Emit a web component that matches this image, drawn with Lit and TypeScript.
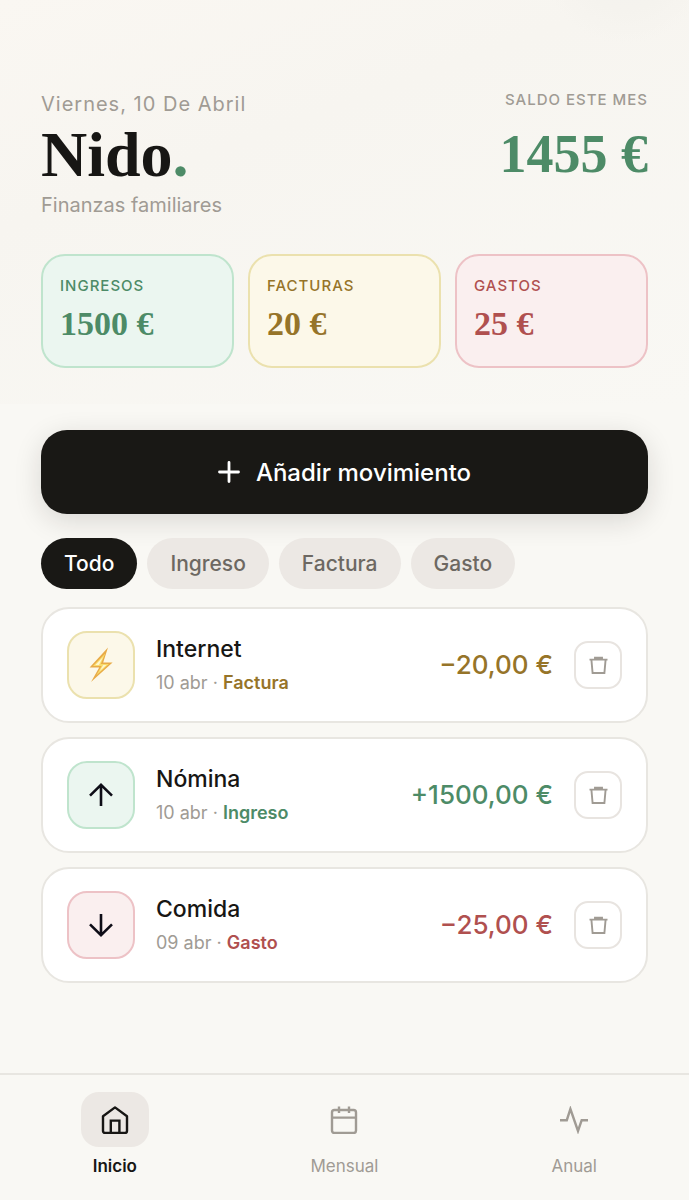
import { LitElement, html, css, svg, nothing } from "lit";
import { customElement, property, state } from "lit/decorators.js";
import { classMap } from "lit/directives/class-map.js";

type Kind = "ingreso" | "factura" | "gasto";

interface Movement {
  name: string;
  date: string;
  kind: Kind;
  amount: string;
}

const KIND_LABEL: Record<Kind, string> = {
  ingreso: "Ingreso",
  factura: "Factura",
  gasto: "Gasto",
};

const MOVEMENTS: Movement[] = [
  { name: "Internet", date: "10 abr", kind: "factura", amount: "−20,00 €" },
  { name: "Nómina", date: "10 abr", kind: "ingreso", amount: "+1500,00 €" },
  { name: "Comida", date: "09 abr", kind: "gasto", amount: "−25,00 €" },
];

const SUMMARY: { label: string; value: string; kind: Kind }[] = [
  { label: "Ingresos", value: "1500 €", kind: "ingreso" },
  { label: "Facturas", value: "20 €", kind: "factura" },
  { label: "Gastos", value: "25 €", kind: "gasto" },
];

const FILTERS: { id: Kind | "todo"; label: string }[] = [
  { id: "todo", label: "Todo" },
  { id: "ingreso", label: "Ingreso" },
  { id: "factura", label: "Factura" },
  { id: "gasto", label: "Gasto" },
];

const TABS = [
  {
    label: "Inicio",
    icon: svg`<path d="M2 10.2 14 1.4l12 8.8V25a2 2 0 0 1-2 2H4a2 2 0 0 1-2-2Z" stroke-linejoin="round"/><path d="M9.8 27V14.6h8.6V27"/>`,
  },
  {
    label: "Mensual",
    icon: svg`<rect x="2" y="4" width="24" height="23" rx="2.4"/><path d="M2 11.6h24M9 .6V7M19 .6V7"/>`,
  },
  {
    label: "Anual",
    icon: svg`<path d="M0 14.2h6.8L10.4 3l7.6 22 3.7-10.8H28"/>`,
  },
];

const tones = css`
  .ingreso {
    --ink: #4d8b67;
    --fill: #ebf6f0;
    --line: #bfe4cd;
  }
  .factura {
    --ink: #967429;
    --fill: #fcf8e9;
    --line: #ebe1ae;
  }
  .gasto {
    --ink: #b0504f;
    --fill: #faefef;
    --line: #edc2c6;
  }
`;

@customElement("movement-row")
export class MovementRow extends LitElement {
  @property({ attribute: false }) item!: Movement;

  static styles = [
    tones,
    css`
      :host {
        display: block;
      }
      .row {
        display: flex;
        align-items: center;
        gap: 21px;
        box-sizing: border-box;
        min-height: 116px;
        padding: 22px 24px;
        background: #fff;
        border: 2px solid #e8e6e1;
        border-radius: 28px;
      }
      .badge {
        display: grid;
        place-items: center;
        flex: none;
        box-sizing: border-box;
        width: 68px;
        height: 68px;
        background: var(--fill);
        border: 2px solid var(--line);
        border-radius: 20px;
        color: #0e0d17;
      }
      .text {
        flex: 1;
        min-width: 0;
      }
      .name {
        font-size: 23px;
        line-height: 32px;
        font-weight: 500;
        color: #171614;
      }
      .meta {
        margin-top: 4px;
        font-size: 18px;
        line-height: 28px;
        color: #a09b94;
      }
      .kind {
        font-weight: 600;
        color: var(--ink);
      }
      .amount {
        font-size: 26px;
        line-height: 32px;
        font-weight: 500;
        color: var(--ink);
        white-space: nowrap;
      }
      .delete {
        display: grid;
        place-items: center;
        flex: none;
        box-sizing: border-box;
        width: 48px;
        height: 48px;
        padding: 0;
        background: #fff;
        border: 2px solid #e8e4e0;
        border-radius: 14px;
        color: #a09b94;
        cursor: pointer;
      }
    `,
  ];

  private badgeIcon(kind: Kind) {
    if (kind === "factura") {
      return html`<svg width="26" height="38" viewBox="0 0 26 38" aria-hidden="true">
        <path d="M20 1.400 1.600 21.600h9.600L3 36 24.600 16.400h-9.400Z" fill="#e8ab48" />
        <path d="M17.200 7.400 5 20h8.600l-5.400 9.400L20.800 18h-8Z" fill="#f9dc6c" />
        <path d="M15 11 7.400 18.900h7.800l-3.600 6.400 6.800-6.200h-7.400Z" fill="#fdf6d0" />
      </svg>`;
    }
    const d = kind === "ingreso" ? "M13 24V3M2 13.600 13 2.800l11 10.800" : "M13 2v21M2 12.400l11 10.800 11-10.800";
    return html`<svg width="26" height="26" viewBox="0 0 26 26" aria-hidden="true"
      fill="none" stroke="currentColor" stroke-width="2.6"><path d=${d} /></svg>`;
  }

  render() {
    const m = this.item;
    if (!m) return nothing;
    return html`<article class="row ${m.kind}">
      <div class="badge">${this.badgeIcon(m.kind)}</div>
      <div class="text">
        <div class="name">${m.name}</div>
        <div class="meta">${m.date} · <span class="kind">${KIND_LABEL[m.kind]}</span></div>
      </div>
      <div class="amount">${m.amount}</div>
      <button class="delete" type="button" aria-label="Eliminar ${m.name}">
        <svg width="20" height="20" viewBox="0 0 20 20" fill="none" stroke="currentColor" stroke-width="1.9" aria-hidden="true">
          <path d="M1.500 4.600h18M7 4.400V2.800h7v1.600M3.400 4.600l1.200 13.400h11.800l1.200-13.400" />
        </svg>
      </button>
    </article>`;
  }
}

@customElement("app-root")
export class AppRoot extends LitElement {
  @state() private filter: Kind | "todo" = "todo";
  @state() private tab = 0;

  static styles = [
    tones,
    css`
      :host {
        display: flex;
        flex-direction: column;
        min-height: 100vh;
        background: #f9f8f4;
        font-family: Inter, "Liberation Sans", sans-serif;
        color: #171614;
      }
      button {
        font-family: inherit;
        cursor: pointer;
      }
      header {
        padding: 88px 41px 36px;
        background:
          radial-gradient(circle at calc(100% - 64px) -40px, #f3f2ee 0, #f5f3ee 50px, transparent 84px),
          linear-gradient(160deg, #faf7f2 0%, #f7f5f0 35%, #f9f8f4 100%);
      }
      .top {
        display: flex;
        justify-content: space-between;
        align-items: flex-start;
      }
      .date {
        font-size: 20px;
        line-height: 32px;
        letter-spacing: 1px;
        color: #a09b94;
      }
      h1 {
        margin: 0;
        font-family: "Liberation Serif", serif;
        font-size: 64px;
        line-height: 70px;
        font-weight: 700;
      }
      .dot {
        color: #4d8b67;
      }
      .tagline {
        font-size: 20px;
        line-height: 30px;
        color: #a09b94;
      }
      .balance {
        text-align: right;
      }
      .caps {
        font-size: 15px;
        line-height: 24px;
        font-weight: 500;
        letter-spacing: 1px;
        text-transform: uppercase;
      }
      .balance .caps {
        color: #a09b94;
      }
      .total {
        margin-top: 12px;
        font-family: "Liberation Serif", serif;
        font-size: 54px;
        line-height: 60px;
        font-weight: 700;
        color: #4d8b67;
      }
      .summary {
        display: grid;
        grid-template-columns: repeat(3, 1fr);
        gap: 14px;
        margin-top: 34px;
      }
      .card {
        box-sizing: border-box;
        min-height: 114px;
        padding: 18px 17px;
        background: var(--fill);
        border: 2px solid var(--line);
        border-radius: 24px;
        color: var(--ink);
      }
      .value {
        margin-top: 8px;
        font-family: "Liberation Serif", serif;
        font-size: 34px;
        line-height: 36px;
        font-weight: 700;
      }
      main {
        flex: 1;
        padding: 26px 41px 40px;
      }
      .add {
        display: flex;
        align-items: center;
        justify-content: center;
        gap: 16px;
        width: 100%;
        height: 84px;
        border: 0;
        border-radius: 26px;
        background: #191815;
        box-shadow: 0 7px 28px rgba(25, 24, 21, 0.14);
        color: #fff;
        font-size: 24px;
        font-weight: 500;
      }
      .filters {
        display: flex;
        flex-wrap: wrap;
        gap: 10px;
        margin-top: 24px;
      }
      .chip {
        height: 51px;
        padding: 0 23px;
        border: 0;
        border-radius: 26px;
        background: #ece8e4;
        color: #6d6862;
        font-size: 21px;
        font-weight: 500;
      }
      .chip.active {
        background: #191815;
        color: #fff;
      }
      .list {
        display: grid;
        gap: 14px;
        margin-top: 18px;
      }
      nav {
        display: grid;
        grid-template-columns: repeat(3, 1fr);
        padding: 17px 0 21px;
        border-top: 2px solid #e8e6e1;
      }
      .tab {
        display: flex;
        flex-direction: column;
        align-items: center;
        gap: 6px;
        padding: 0;
        border: 0;
        background: none;
        color: #a09b94;
        font-size: 17px;
        line-height: 26px;
      }
      .pill {
        display: grid;
        place-items: center;
        width: 68px;
        height: 55px;
        border-radius: 18px;
      }
      .tab.active {
        color: #171614;
        font-weight: 600;
      }
      .tab.active .pill {
        background: #ece8e4;
      }
    `,
  ];

  render() {
    const shown = MOVEMENTS.filter((m) => this.filter === "todo" || m.kind === this.filter);
    return html`
      <header>
        <div class="top">
          <div>
            <div class="date">Viernes, 10 De Abril</div>
            <h1>Nido<span class="dot">.</span></h1>
            <div class="tagline">Finanzas familiares</div>
          </div>
          <div class="balance">
            <div class="caps">Saldo este mes</div>
            <div class="total">1455 €</div>
          </div>
        </div>
        <div class="summary">
          ${SUMMARY.map(
            (s) => html`<div class="card ${s.kind}">
              <div class="caps">${s.label}</div>
              <div class="value">${s.value}</div>
            </div>`
          )}
        </div>
      </header>
      <main>
        <button class="add" type="button">
          <svg width="22" height="22" viewBox="0 0 22 22" fill="none" stroke="currentColor" stroke-width="2.8" stroke-linecap="round" aria-hidden="true">
            <path d="M11 1.500v19M1.500 11h19" />
          </svg>
          Añadir movimiento
        </button>
        <div class="filters">
          ${FILTERS.map(
            (f) => html`<button
              type="button"
              class=${classMap({ chip: true, active: this.filter === f.id })}
              aria-pressed=${this.filter === f.id ? "true" : "false"}
              @click=${() => (this.filter = f.id)}
            >${f.label}</button>`
          )}
        </div>
        <div class="list">
          ${shown.map((m) => html`<movement-row .item=${m}></movement-row>`)}
        </div>
      </main>
      <nav>
        ${TABS.map(
          (t, i) => html`<button
            type="button"
            class=${classMap({ tab: true, active: this.tab === i })}
            @click=${() => (this.tab = i)}
          >
            <span class="pill">
              <svg width="28" height="28" viewBox="0 0 28 28" fill="none" stroke="currentColor" stroke-width="2.4" aria-hidden="true">${t.icon}</svg>
            </span>
            <span>${t.label}</span>
          </button>`
        )}
      </nav>
    `;
  }
}
